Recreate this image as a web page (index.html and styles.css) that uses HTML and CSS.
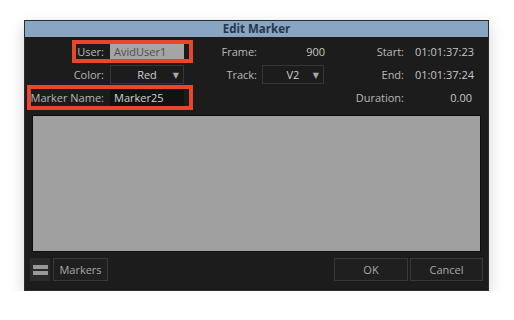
FILE: index.html
```
<!DOCTYPE html>
<html>
<head>
<title>Edit Marker</title>
<link rel="stylesheet" href="styles.css">
</head>
<body>

<div class="dialog">
  <div class="title">Edit Marker</div>

  <div class="fields">
    <div class="cell left">
      <div class="mark mark-user">
        <span class="label">User:</span>
        <span class="input input-user">AvidUser1</span>
      </div>
    </div>
    <div class="cell mid">
      <span class="label lbl-mid">Frame:</span>
      <span class="value val-mid">900</span>
    </div>
    <div class="cell right">
      <span class="label lbl-right">Start:</span>
      <span class="value val-right">01:01:37:23</span>
    </div>

    <div class="cell left pad">
      <span class="label">Color:</span>
      <span class="select select-wide">Red<i class="arrow">&#9660;</i></span>
    </div>
    <div class="cell mid">
      <span class="label lbl-mid">Track:</span>
      <span class="select select-track">V2<i class="arrow">&#9660;</i></span>
    </div>
    <div class="cell right">
      <span class="label lbl-right">End:</span>
      <span class="value val-right">01:01:37:24</span>
    </div>

    <div class="cell left">
      <div class="mark mark-name">
        <span class="label">Marker Name:</span>
        <span class="input input-name">Marker25</span>
      </div>
    </div>
    <div class="cell mid"></div>
    <div class="cell right">
      <span class="label lbl-right">Duration:</span>
      <span class="value val-right">0.00</span>
    </div>
  </div>

  <div class="notes"></div>

  <div class="footer">
    <button class="btn btn-menu"><span class="bar"></span><span class="bar"></span></button>
    <button class="btn btn-markers">Markers</button>
    <span class="spacer"></span>
    <button class="btn btn-ok">OK</button>
    <button class="btn btn-cancel">Cancel</button>
  </div>
</div>

</body>
</html>
```

FILE: styles.css
```
body {
  margin: 0;
  padding: 20px 0 0 24px;
  background: #fff;
  font-family: 'Open Sans', 'DejaVu Sans', sans-serif;
  font-size: 11px;
  color: #b9b9b9;
}

.dialog {
  box-sizing: border-box;
  width: 465px;
  height: 271px;
  background: #1c1c1c;
  border: 1px solid #2c2c2c;
  box-shadow: 0 5px 14px rgba(0, 0, 0, 0.18);
}

.title {
  height: 16px;
  line-height: 16px;
  background: #88a5c3;
  color: #26364a;
  font-weight: bold;
  font-size: 11.5px;
  text-align: center;
}

.fields {
  display: grid;
  grid-template-columns: 168px 132px 1fr;
  grid-template-rows: 23px 22px 25px;
  margin-top: 3px;
  white-space: nowrap;
}

.cell {
  display: flex;
  align-items: center;
}

.left {
  justify-content: flex-end;
}

.pad {
  padding-right: 9px;
}

.left .label {
  margin-right: 6px;
}

.mark {
  box-sizing: border-box;
  height: 100%;
  border: 4px solid #e8472b;
  display: flex;
  align-items: center;
  justify-content: flex-end;
  padding-right: 5px;
}

.mark-user {
  width: 121px;
}

.mark-name {
  width: 166px;
}

.input {
  box-sizing: border-box;
  flex: none;
  width: 74px;
  height: 16px;
  line-height: 16px;
  padding-left: 4px;
}

.input-user {
  background: #a5a5a5;
  color: #4e4e4e;
  height: 15px;
  line-height: 15px;
}

.input-name {
  background: #121212;
  color: #d2d2d2;
}

.select {
  box-sizing: border-box;
  position: relative;
  height: 19px;
  line-height: 17px;
  border: 1px solid #363636;
  color: #cfcfcf;
  text-align: center;
}

.select-wide {
  width: 74px;
}

.select-track {
  width: 62px;
  margin-left: 5px;
}

.arrow {
  position: absolute;
  right: 4px;
  top: 0;
  font-style: normal;
  font-size: 8px;
  color: #a9a9a9;
}

.lbl-mid {
  width: 64px;
  text-align: right;
}

.val-mid {
  width: 63px;
  margin-left: 5px;
  text-align: right;
}

.lbl-right {
  width: 79px;
  text-align: right;
}

.val-right {
  width: 57px;
  margin-left: 11px;
  text-align: right;
}

.value {
  color: #c6c6c6;
}

.notes {
  box-sizing: border-box;
  height: 137px;
  margin: 5px 7px 0 7px;
  background: #a0a0a0;
  border: 1px solid #0e0e0e;
}

.footer {
  display: flex;
  height: 23px;
  margin-top: 6px;
  padding: 0 5px;
}

.btn {
  box-sizing: border-box;
  height: 23px;
  background: #1f1f1f;
  border: 1px solid #383838;
  color: #a9a9a9;
  font-family: inherit;
  font-size: 11px;
  padding: 0;
}

.btn-menu {
  width: 20px;
  background: #2a2a2a;
  border: none;
  display: flex;
  flex-direction: column;
  align-items: center;
  justify-content: center;
  gap: 2px;
}

.bar {
  display: block;
  width: 15px;
  height: 4px;
  background: #999;
}

.btn-markers {
  width: 55px;
  margin-left: 3px;
}

.spacer {
  flex: 1;
}

.btn-ok {
  width: 74px;
}

.btn-cancel {
  width: 73px;
  margin-left: 2px;
}
```
